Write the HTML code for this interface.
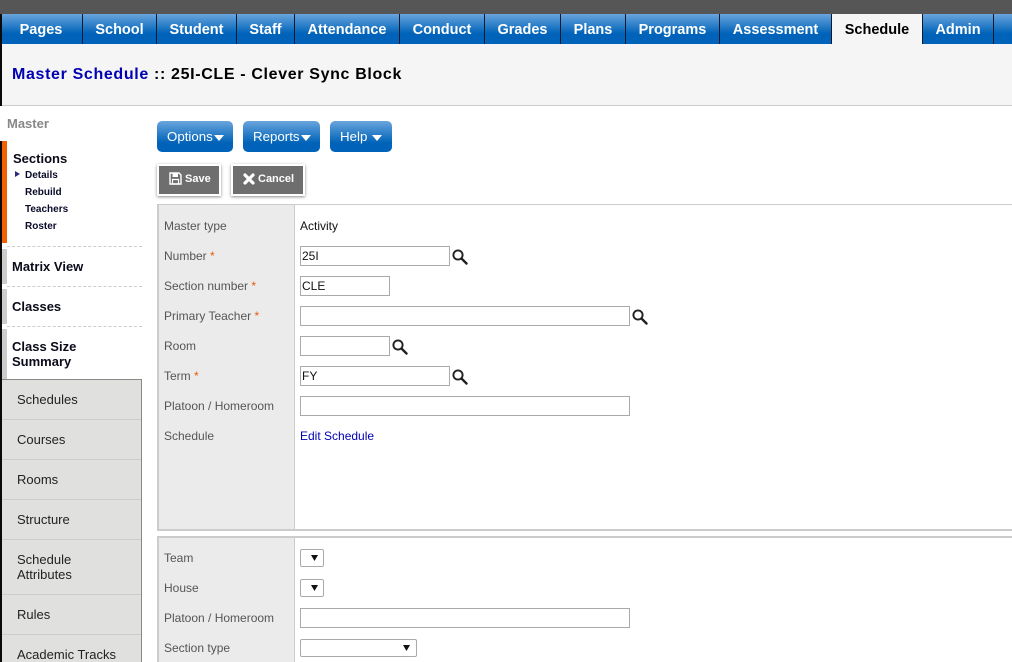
<!DOCTYPE html>
<html><head><meta charset="utf-8"><title>Master Schedule</title>
<style>
html,body{margin:0;padding:0;background:#fff;}
#p{position:relative;width:1012px;height:662px;overflow:hidden;background:#fff;font-family:"Liberation Sans",sans-serif;}
#p div,#p span.a,#p a,#p svg{position:absolute;}
.t{white-space:nowrap;}
.tab{top:14px;height:30px;line-height:32px;text-align:center;color:#fff;font-weight:bold;font-size:14.5px;background:linear-gradient(#6aa5dd,#0063b9 65%);border-right:1px solid #0a1a2a;box-sizing:border-box;white-space:nowrap;}
.bar{left:2px;width:5px;background:#ccc;}
.dash{left:7px;width:135px;height:0;border-top:1px dashed #ccc;}
.sh{white-space:nowrap;font-weight:bold;font-size:13px;color:#0a0a1a;line-height:15px;}
.sub{left:25px;white-space:nowrap;font-weight:bold;font-size:10px;color:#0a0a2a;line-height:12px;}
.m{left:2px;width:139px;background:#e0e0de;border-bottom:1px solid #ccc;box-sizing:border-box;color:#222;font-size:13px;line-height:15px;padding-left:15px;}
.btn{top:121px;height:31px;border-radius:5px;background:linear-gradient(#6aa5dd,#0063b9 70%);color:#fff;font-size:13.3px;line-height:31px;white-space:nowrap;}
.gb{top:164px;height:28px;background:#6e6e6e;border:2px solid #fff;box-shadow:0 1px 3px rgba(0,0,0,.45);color:#fff;font-size:11px;font-weight:bold;line-height:27px;white-space:nowrap;}
.l{left:164px;font-size:12px;color:#555;line-height:14px;white-space:nowrap;}
.l b{color:#e8590c;font-weight:normal;}
.i{left:300px;height:20px;border:1px solid #aaa;box-sizing:border-box;background:#fff;font-size:12px;line-height:18px;padding-left:1px;color:#111;white-space:nowrap;}
.s{left:300px;height:18px;border:1px solid #aaa;border-radius:2px;box-sizing:border-box;background:#fff;}
.s svg{top:5px;}
</style></head><body><div id="p">
<div style="left:0;top:0;width:1012px;height:14px;background:#565656"></div>
<div style="left:0;top:44px;width:1012px;height:61px;background:#f5f5f5"></div>
<div style="left:0;top:105px;width:1012px;height:1px;background:#ccc"></div>

<div style="left:2px;top:14px;width:1010px;height:30px;background:linear-gradient(#6aa5dd,#0063b9 65%)"></div>
<div class="tab" style="left:2px;width:81px;padding-right:2px">Pages</div>
<div class="tab" style="left:83px;width:74px">School</div>
<div class="tab" style="left:157px;width:80px">Student</div>
<div class="tab" style="left:237px;width:58px">Staff</div>
<div class="tab" style="left:295px;width:105px">Attendance</div>
<div class="tab" style="left:400px;width:85px">Conduct</div>
<div class="tab" style="left:485px;width:76px">Grades</div>
<div class="tab" style="left:561px;width:65px">Plans</div>
<div class="tab" style="left:626px;width:94px">Programs</div>
<div class="tab" style="left:720px;width:112px">Assessment</div>
<div class="tab" style="left:832px;width:91px;background:#f5f5f5;color:#000">Schedule</div>
<div class="tab" style="left:923px;width:71px">Admin</div>

<div class="t" style="left:12px;top:66px;font-size:16px;font-weight:bold;line-height:18px;letter-spacing:.65px;color:#000"><span style="color:#0000b4">Master Schedule</span> :: 25I-CLE - Clever Sync Block</div>

<div class="t" style="left:7px;top:116px;font-size:13px;font-weight:bold;color:#888;line-height:15px">Master</div>
<div class="bar" style="top:141px;height:102px;background:#f26000"></div>
<div class="sh" style="left:13px;top:151px">Sections</div>
<div style="left:15px;top:171px;width:0;height:0;border-left:5px solid #2a2a80;border-top:3px solid transparent;border-bottom:3px solid transparent"></div>
<div class="sub" style="top:170px">Details</div>
<div class="sub" style="top:187px">Rebuild</div>
<div class="sub" style="top:204px">Teachers</div>
<div class="sub" style="top:221px">Roster</div>
<div class="dash" style="top:246px"></div>
<div class="bar" style="top:249px;height:35px"></div>
<div class="sh" style="left:12px;top:259px">Matrix View</div>
<div class="dash" style="top:286px"></div>
<div class="bar" style="top:289px;height:35px"></div>
<div class="sh" style="left:12px;top:299px">Classes</div>
<div class="dash" style="top:326px"></div>
<div class="bar" style="top:329px;height:50px"></div>
<div class="sh" style="left:12px;top:339px">Class Size<br>Summary</div>

<div style="left:2px;top:379px;width:140px;height:283px;background:#e0e0de;border-top:1px solid #888;border-right:1px solid #888;box-sizing:border-box"></div>
<div class="m" style="top:380px;height:40px;padding-top:12px">Schedules</div>
<div class="m" style="top:420px;height:40px;padding-top:12px">Courses</div>
<div class="m" style="top:460px;height:40px;padding-top:12px">Rooms</div>
<div class="m" style="top:500px;height:40px;padding-top:12px">Structure</div>
<div class="m" style="top:540px;height:55px;padding-top:12px">Schedule<br>Attributes</div>
<div class="m" style="top:595px;height:40px;padding-top:12px">Rules</div>
<div class="m" style="top:635px;height:27px;padding-top:12px;border:0">Academic Tracks</div>
<div style="left:0;top:14px;width:2px;height:92px;background:#0a0a0a"></div>
<div style="left:0;top:141px;width:2px;height:521px;background:#0a0a0a"></div>

<div class="btn" style="left:157px;width:76px"><span class="a" style="left:10px">Options</span><span class="a" style="left:57px;top:14px;width:0;height:0;border-left:5px solid transparent;border-right:5px solid transparent;border-top:6px solid #fff"></span></div>
<div class="btn" style="left:243px;width:77px"><span class="a" style="left:10px">Reports</span><span class="a" style="left:58px;top:14px;width:0;height:0;border-left:5px solid transparent;border-right:5px solid transparent;border-top:6px solid #fff"></span></div>
<div class="btn" style="left:330px;width:62px"><span class="a" style="left:10px">Help</span><span class="a" style="left:42px;top:14px;width:0;height:0;border-left:5px solid transparent;border-right:5px solid transparent;border-top:6px solid #fff"></span></div>

<div class="gb" style="left:157px;width:60px">
<svg style="left:10px;top:6px" width="13" height="13" viewBox="0 0 13 13"><path d="M1 1H10L12 3V12H1Z" fill="none" stroke="#fff" stroke-width="1.4"/><path d="M3.5 1.5H9V5H3.5Z" fill="#fff"/><path d="M3.5 7.5H9.5V12H3.5Z" fill="none" stroke="#fff" stroke-width="1.2"/></svg>
<span class="a" style="left:26px">Save</span></div>
<div class="gb" style="left:231px;width:70px">
<svg style="left:10px;top:7px" width="12" height="12" viewBox="0 0 12 12"><path d="M2 2L10 10M10 2L2 10" stroke="#fff" stroke-width="3.2" stroke-linecap="round"/></svg>
<span class="a" style="left:25px">Cancel</span></div>

<!-- panel 1 -->
<div style="left:157px;top:204px;width:855px;height:327px;border-top:1px solid #ccc;border-bottom:2px solid #ccc;border-left:2px solid #ccc;box-sizing:border-box"></div>
<div style="left:159px;top:205px;width:135px;height:324px;background:#ebebeb;border-right:1px solid #ccc"></div>
<!-- panel 2 -->
<div style="left:157px;top:536px;width:855px;height:126px;border-top:2px solid #ccc;border-left:2px solid #ccc;box-sizing:border-box"></div>
<div style="left:159px;top:538px;width:135px;height:124px;background:#ebebeb;border-right:1px solid #ccc"></div>

<div class="l" style="top:219px">Master type</div>
<div class="t" style="left:300px;top:219px;font-size:12px;line-height:14px;color:#111">Activity</div>
<div class="l" style="top:249px">Number <b>*</b></div>
<div class="i" style="top:246px;width:150px">25I</div>
<svg style="left:452px;top:249px" width="16" height="16" viewBox="0 0 16 16"><circle cx="6" cy="6" r="4.6" fill="none" stroke="#222" stroke-width="1.9"/><path d="M9.5 9.5L14.5 14.5" stroke="#222" stroke-width="2.4" stroke-linecap="round"/></svg>
<div class="l" style="top:279px">Section number <b>*</b></div>
<div class="i" style="top:276px;width:90px">CLE</div>
<div class="l" style="top:309px">Primary Teacher <b>*</b></div>
<div class="i" style="top:306px;width:330px"></div>
<svg style="left:632px;top:309px" width="16" height="16" viewBox="0 0 16 16"><circle cx="6" cy="6" r="4.6" fill="none" stroke="#222" stroke-width="1.9"/><path d="M9.5 9.5L14.5 14.5" stroke="#222" stroke-width="2.4" stroke-linecap="round"/></svg>
<div class="l" style="top:339px">Room</div>
<div class="i" style="top:336px;width:90px"></div>
<svg style="left:392px;top:339px" width="16" height="16" viewBox="0 0 16 16"><circle cx="6" cy="6" r="4.6" fill="none" stroke="#222" stroke-width="1.9"/><path d="M9.5 9.5L14.5 14.5" stroke="#222" stroke-width="2.4" stroke-linecap="round"/></svg>
<div class="l" style="top:369px">Term <b>*</b></div>
<div class="i" style="top:366px;width:150px">FY</div>
<svg style="left:452px;top:369px" width="16" height="16" viewBox="0 0 16 16"><circle cx="6" cy="6" r="4.6" fill="none" stroke="#222" stroke-width="1.9"/><path d="M9.5 9.5L14.5 14.5" stroke="#222" stroke-width="2.4" stroke-linecap="round"/></svg>
<div class="l" style="top:399px">Platoon / Homeroom</div>
<div class="i" style="top:396px;width:330px"></div>
<div class="l" style="top:429px">Schedule</div>
<div class="t" style="left:300px;top:429px;font-size:12px;line-height:14px;color:#0000b4">Edit Schedule</div>

<div class="l" style="top:551px">Team</div>
<div class="s" style="top:549px;width:24px"><svg style="left:10px" width="7" height="6" viewBox="0 0 7 6"><path d="M0 0H7L3.5 6Z" fill="#111"/></svg></div>
<div class="l" style="top:581px">House</div>
<div class="s" style="top:579px;width:24px"><svg style="left:10px" width="7" height="6" viewBox="0 0 7 6"><path d="M0 0H7L3.5 6Z" fill="#111"/></svg></div>
<div class="l" style="top:611px">Platoon / Homeroom</div>
<div class="i" style="top:608px;width:330px"></div>
<div class="l" style="top:641px">Section type</div>
<div class="s" style="top:639px;width:117px"><svg style="left:102px" width="7" height="6" viewBox="0 0 7 6"><path d="M0 0H7L3.5 6Z" fill="#111"/></svg></div>
</div></body></html>
